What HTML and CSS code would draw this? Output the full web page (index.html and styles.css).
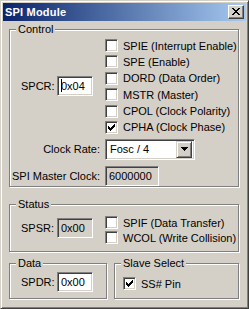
FILE: index.html
```html
<!DOCTYPE html>
<html>
<head>
<meta charset="utf-8">
<link rel="stylesheet" href="styles.css">
</head>
<body>
<div class="window">
  <div class="titlebar">
    <span class="title">SPI Module</span>
    <span class="close">
      <svg width="8" height="7" viewBox="0 0 8 7" shape-rendering="crispEdges">
        <rect x="0" y="0" width="2" height="1"/><rect x="6" y="0" width="2" height="1"/>
        <rect x="1" y="1" width="2" height="1"/><rect x="5" y="1" width="2" height="1"/>
        <rect x="2" y="2" width="4" height="1"/>
        <rect x="3" y="3" width="2" height="1"/>
        <rect x="2" y="4" width="4" height="1"/>
        <rect x="1" y="5" width="2" height="1"/><rect x="5" y="5" width="2" height="1"/>
        <rect x="0" y="6" width="2" height="1"/><rect x="6" y="6" width="2" height="1"/>
      </svg>
    </span>
  </div>
  <div class="client">
    <div class="group control">
      <span class="legend">Control</span>
      <div class="split">
        <div class="reg reg-center"><span class="lbl">SPCR:</span><span class="field edit"><span class="caret"></span>0x04</span></div>
        <div class="checks">
          <div class="check"><span class="box"></span>SPIE (Interrupt Enable)</div>
          <div class="check"><span class="box"></span>SPE (Enable)</div>
          <div class="check"><span class="box"></span>DORD (Data Order)</div>
          <div class="check"><span class="box"></span>MSTR (Master)</div>
          <div class="check"><span class="box"></span>CPOL (Clock Polarity)</div>
          <div class="check"><span class="box checked"><svg width="7" height="7" viewBox="0 0 7 7" shape-rendering="crispEdges"><rect x="6" y="0" width="1" height="1"/><rect x="5" y="1" width="2" height="1"/><rect x="0" y="2" width="1" height="1"/><rect x="4" y="2" width="3" height="1"/><rect x="0" y="3" width="2" height="1"/><rect x="3" y="3" width="3" height="1"/><rect x="0" y="4" width="5" height="1"/><rect x="1" y="5" width="3" height="1"/><rect x="2" y="6" width="1" height="1"/></svg></span>CPHA (Clock Phase)</div>
        </div>
      </div>
      <div class="form-row rate-row">
        <span class="row-label">Clock Rate:</span>
        <span class="combo"><span class="combo-text">Fosc / 4</span><span class="drop"><svg width="7" height="4" viewBox="0 0 7 4" shape-rendering="crispEdges"><rect x="0" y="0" width="7" height="1"/><rect x="1" y="1" width="5" height="1"/><rect x="2" y="2" width="3" height="1"/><rect x="3" y="3" width="1" height="1"/></svg></span></span>
      </div>
      <div class="form-row clock-row">
        <span class="row-label">SPI Master Clock:</span>
        <span class="field ro wide">6000000</span>
      </div>
    </div>

    <div class="group status">
      <span class="legend">Status</span>
      <div class="split">
        <div class="reg reg-status"><span class="lbl">SPSR:</span><span class="field ro">0x00</span></div>
        <div class="checks checks-status">
          <div class="check"><span class="box"></span>SPIF (Data Transfer)</div>
          <div class="check"><span class="box"></span>WCOL (Write Collision)</div>
        </div>
      </div>
    </div>

    <div class="bottom-row">
      <div class="group data">
        <span class="legend">Data</span>
        <div class="reg reg-data"><span class="lbl">SPDR:</span><span class="field edit">0x00</span></div>
      </div>
      <div class="group slave">
        <span class="legend">Slave Select</span>
        <div class="check ss"><span class="box checked"><svg width="7" height="7" viewBox="0 0 7 7" shape-rendering="crispEdges"><rect x="6" y="0" width="1" height="1"/><rect x="5" y="1" width="2" height="1"/><rect x="0" y="2" width="1" height="1"/><rect x="4" y="2" width="3" height="1"/><rect x="0" y="3" width="2" height="1"/><rect x="3" y="3" width="3" height="1"/><rect x="0" y="4" width="5" height="1"/><rect x="1" y="5" width="3" height="1"/><rect x="2" y="6" width="1" height="1"/></svg></span>SS# Pin</div>
      </div>
    </div>
  </div>
</div>
</body>
</html>
```

FILE: styles.css
```css
* { box-sizing: border-box; }
html, body { margin: 0; padding: 0; background: #d4d0c8; }
body {
  font-family: "Liberation Sans", Arial, sans-serif;
  font-size: 11px;
  color: #000;
}
.window {
  width: 249px;
  height: 309px;
  background: #d4d0c8;
  border: 1px solid;
  border-color: #d4d0c8 #404040 #404040 #d4d0c8;
  box-shadow: inset 1px 1px 0 #fff, inset -1px -1px 0 #808080;
  padding: 2px;
}
.titlebar {
  height: 18px;
  background: linear-gradient(to right, #0a246a, #a6caf0);
  display: flex;
  align-items: center;
  justify-content: space-between;
  padding: 0 2px 0 2px;
}
.title {
  color: #fff;
  font-weight: bold;
  font-size: 11px;
  letter-spacing: 0.2px;
}
.close {
  width: 16px;
  height: 14px;
  background: #d4d0c8;
  border: 1px solid;
  border-color: #fff #404040 #404040 #fff;
  box-shadow: inset -1px -1px 0 #808080;
  display: flex;
  align-items: center;
  justify-content: center;
  padding: 0 1px 1px 0;
}
.close svg { display: block; fill: #000; }
.client {
  padding: 8px 7px 0 6px;
}
.group {
  position: relative;
  border: 1px solid #808080;
  box-shadow: inset 1px 1px 0 #fff, 1px 1px 0 #fff;
}
.legend {
  position: absolute;
  top: -7px;
  left: 6px;
  line-height: 13px;
  padding: 0 2px;
  background: #d4d0c8;
  white-space: nowrap;
}
.control {
  height: 158px;
  padding-top: 9px;
}
.split {
  display: flex;
}
.reg {
  display: flex;
  align-items: center;
  width: 95px;
  padding-left: 11px;
  flex: none;
}
.reg-center { align-self: center; margin-top: -1px; }
.lbl { width: 36px; flex: none; }
.checks {
  display: flex;
  flex-direction: column;
  gap: 3.4px;
}
.check {
  display: flex;
  align-items: center;
  height: 13px;
  white-space: nowrap;
}
.box {
  width: 13px;
  height: 13px;
  flex: none;
  background: #fff;
  border: 1px solid;
  border-color: #808080 #fff #fff #808080;
  box-shadow: inset 1px 1px 0 #404040, inset -1px -1px 0 #d4d0c8;
  margin-right: 5px;
  display: flex;
  align-items: center;
  justify-content: center;
}
.box svg { display: block; fill: #000; }
.field {
  height: 20px;
  width: 36px;
  border: 1px solid;
  border-color: #808080 #fff #fff #808080;
  box-shadow: inset 1px 1px 0 #404040, inset -1px -1px 0 #d4d0c8;
  background: #fff;
  padding: 0 0 0 3px;
  display: flex;
  align-items: center;
  white-space: nowrap;
}
.field.ro { background: #d4d0c8; }
.field.wide { width: 54px; }
.caret {
  width: 1px;
  height: 13px;
  background: #000;
  margin-right: -1px;
  flex: none;
}
.form-row {
  display: flex;
  align-items: center;
}
.row-label {
  width: 95px;
  flex: none;
  text-align: right;
  padding-right: 5px;
  white-space: nowrap;
}
.rate-row { margin-top: 5px; }
.clock-row { margin-top: 6px; }
.combo {
  width: 90px;
  height: 21px;
  border: 1px solid;
  border-color: #808080 #fff #fff #808080;
  box-shadow: inset 1px 1px 0 #404040, inset -1px -1px 0 #d4d0c8;
  background: #fff;
  display: flex;
  align-items: center;
  justify-content: space-between;
  padding: 2px 2px 2px 4px;
}
.drop {
  width: 16px;
  height: 17px;
  background: #d4d0c8;
  border: 1px solid;
  border-color: #d4d0c8 #404040 #404040 #d4d0c8;
  box-shadow: inset 1px 1px 0 #fff, inset -1px -1px 0 #808080;
  display: flex;
  align-items: center;
  justify-content: center;
}
.drop svg { display: block; fill: #000; }
.status {
  margin-top: 17px;
  height: 48px;
}
.reg-status { align-self: flex-start; margin-top: 13px; }
.checks-status { padding-top: 11px; gap: 2px; }
.bottom-row {
  display: flex;
  margin-top: 11px;
}
.data {
  width: 98px;
  height: 36px;
}
.reg-data { margin-top: 8px; }
.slave {
  margin-left: 7px;
  width: 125px;
  height: 36px;
}
.ss {
  margin-top: 13px;
  padding-left: 8px;
}
```
